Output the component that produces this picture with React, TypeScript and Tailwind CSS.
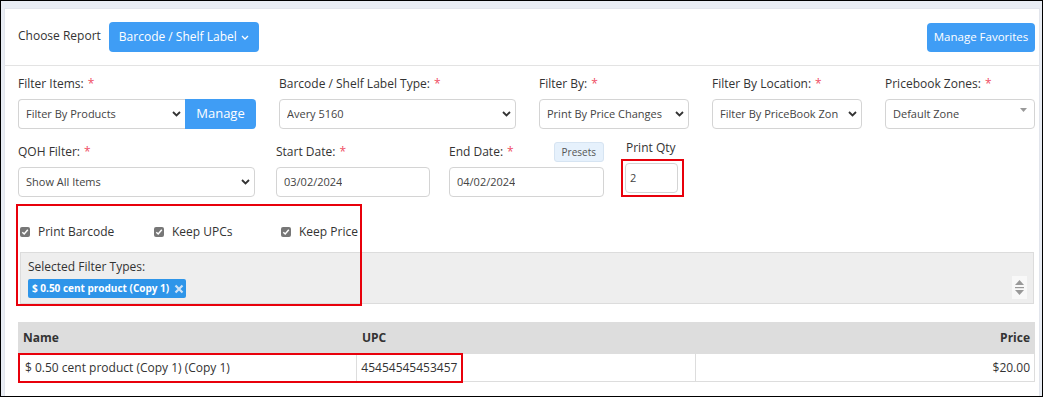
import React from "react";

const Chevron = () => (
  <svg width="9" height="6" viewBox="0 0 9 6" className="shrink-0">
    <path d="M1 1 L4.5 4.5 L8 1" fill="none" stroke="#333" strokeWidth="1.8" />
  </svg>
);

const Label = ({ text, req = true }: { text: string; req?: boolean }) => (
  <div className="text-[12px] leading-[18px] text-[#333] whitespace-nowrap">
    {text}
    {req && <span className="text-[#ef4e64] ml-[4px]">*</span>}
  </div>
);

const Select = ({ value, w, chevron = true, tri = false }: { value: string; w: string; chevron?: boolean; tri?: boolean }) => (
  <div className={`${w} h-[30px] border border-[#d4d4d4] rounded-[4px] bg-white flex items-center justify-between pl-[7px] pr-[4px]`}>
    <span className="text-[11px] text-[#444] whitespace-nowrap overflow-hidden">{value}</span>
    {chevron && <Chevron />}
    {tri && (
      <svg width="7" height="4" viewBox="0 0 7 4" className="self-start mt-[8px] mr-[3px]">
        <path d="M0 0 L7 0 L3.5 4 Z" fill="#999" />
      </svg>
    )}
  </div>
);

const Check = ({ text }: { text: string }) => (
  <div className="flex items-center gap-[8px]">
    <div className="w-[10px] h-[10px] rounded-[2px] bg-[#777] flex items-center justify-center">
      <svg width="8" height="8" viewBox="0 0 8 8">
        <path d="M1.3 4.2 L3.2 6 L6.8 1.8" fill="none" stroke="#fff" strokeWidth="1.5" />
      </svg>
    </div>
    <span className="text-[12px] text-[#333]">{text}</span>
  </div>
);

export default function App() {
  return (
    <div className="w-[1043px] h-[397px] border border-black bg-[#e9edf4] overflow-hidden font-['Open_Sans',sans-serif]">
      <div className="relative ml-[3px] mt-[7px] w-[1036px] h-[400px] bg-white border border-[#e2e5ec]">
        {/* header */}
        <div className="h-[57px] border-b border-[#e3e3e3] flex items-center justify-between pl-[13px] pr-[4px]">
          <div className="flex items-center gap-[8px]">
            <span className="text-[12px] text-[#333] mt-[-3px]">Choose Report</span>
            <div className="h-[30px] w-[150px] rounded-[4px] bg-[#3f9df5] text-white text-[12px] flex items-center justify-center gap-[4px]">
              Barcode / Shelf Label
              <svg width="8" height="5" viewBox="0 0 8 5">
                <path d="M1 1 L4 4 L7 1" fill="none" stroke="#fff" strokeWidth="1.3" />
              </svg>
            </div>
          </div>
          <div className="h-[29px] w-[108px] rounded-[4px] bg-[#3f9df5] text-white text-[11.5px] flex items-center justify-center">
            Manage Favorites
          </div>
        </div>

        {/* row 1 */}
        <div className="flex gap-[23px] pl-[13px] mt-[9px]">
          <div className="w-[238px] flex flex-col gap-[6px]">
            <Label text="Filter Items:" />
            <div className="flex">
              <div className="w-[167px] h-[30px] border border-[#d4d4d4] border-r-0 rounded-l-[4px] bg-white flex items-center justify-between pl-[7px] pr-[4px]">
                <span className="text-[11px] text-[#444]">Filter By Products</span>
                <Chevron />
              </div>
              <div className="w-[71px] h-[30px] bg-[#3f9df5] rounded-r-[4px] text-white text-[13px] flex items-center justify-center">
                Manage
              </div>
            </div>
          </div>
          <div className="w-[237px] flex flex-col gap-[6px]">
            <Label text="Barcode / Shelf Label Type:" />
            <Select value="Avery 5160" w="w-[237px]" />
          </div>
          <div className="w-[150px] flex flex-col gap-[6px]">
            <Label text="Filter By:" />
            <Select value="Print By Price Changes" w="w-[150px]" />
          </div>
          <div className="w-[150px] flex flex-col gap-[6px]">
            <Label text="Filter By Location:" />
            <Select value="Filter By PriceBook Zon" w="w-[150px]" />
          </div>
          <div className="w-[150px] flex flex-col gap-[6px]">
            <Label text="Pricebook Zones:" />
            <Select value="Default Zone" w="w-[150px]" chevron={false} tri />
          </div>
        </div>

        {/* row 2 */}
        <div className="flex items-end pl-[13px] mt-[10px]">
          <div className="w-[237px] flex flex-col gap-[6px]">
            <Label text="QOH Filter:" />
            <Select value="Show All Items" w="w-[237px]" />
          </div>
          <div className="w-[154px] ml-[21px] flex flex-col gap-[6px]">
            <Label text="Start Date:" />
            <Select value="03/02/2024" w="w-[154px]" chevron={false} />
          </div>
          <div className="w-[155px] ml-[19px] flex flex-col gap-[5px]">
            <div className="flex items-center justify-between">
              <Label text="End Date:" />
              <div className="h-[20px] px-[7px] rounded-[3px] bg-[#e6f1fc] border border-[#d6e4f2] text-[10px] text-[#555] flex items-center">
                Presets
              </div>
            </div>
            <Select value="04/02/2024" w="w-[155px]" chevron={false} />
          </div>
          <div className="ml-[17px] flex flex-col gap-[2px]">
            <div className="text-[12px] leading-[18px] text-[#333] pl-[5px]">Print Qty</div>
            <div className="border-2 border-[#e8000b] p-[2px] w-[63px]">
              <div className="w-[53px] h-[30px] border border-[#d4d4d4] rounded-[4px] flex items-center pl-[4px] text-[11px] text-[#444]">
                2
              </div>
            </div>
          </div>
        </div>

        {/* checkbox + filter types */}
        <div className="relative pl-[15px] pr-[5px] mt-[9px]">
          <div className="flex items-center h-[46px] pt-[6px]">
            <div className="w-[134px]"><Check text="Print Barcode" /></div>
            <div className="w-[127px]"><Check text="Keep UPCs" /></div>
            <Check text="Keep Price" />
          </div>
          <div className="h-[52px] border border-[#dcdcdc] bg-[#eeeeee] flex justify-between pl-[7px] pr-[6px]">
            <div className="flex flex-col">
              <div className="text-[12px] text-[#333] mt-[5px] leading-[18px]">Selected Filter Types:</div>
              <div className="mt-[3px] h-[19px] w-[158px] rounded-[2px] bg-[#2e95e9] flex items-center pl-[4px] gap-[5px]">
                <span className="text-[10px] font-bold text-white whitespace-nowrap">$ 0.50 cent product (Copy 1)</span>
                <svg width="10" height="10" viewBox="0 0 10 10">
                  <path d="M1.5 1.5 L8.5 8.5 M8.5 1.5 L1.5 8.5" stroke="#cde2f7" strokeWidth="2.2" />
                </svg>
              </div>
            </div>
            <div className="self-end mb-[4px] w-[15px] h-[23px] bg-[#f8f8f8] flex items-center justify-center">
              <svg width="11" height="18" viewBox="0 0 11 18">
                <path d="M5.5 1 L10 6 L1 6 Z" fill="#999" />
                <rect x="1" y="8" width="9" height="1.2" fill="#999" />
                <path d="M1 11 L10 11 L5.5 16 Z" fill="#999" />
              </svg>
            </div>
          </div>
          <div className="absolute left-[11px] top-[-2px] w-[346px] h-[102px] border-2 border-[#e8000b] pointer-events-none" />
        </div>

        {/* table */}
        <div className="relative ml-[13px] mr-[4px] mt-[18px]">
          <div className="grid grid-cols-3 h-[32px] bg-[#dddddd] items-center text-[12px] font-bold text-[#333]">
            <div className="pl-[5px]">Name</div>
            <div className="pl-[5px]">UPC</div>
            <div className="text-right pr-[5px]">Price</div>
          </div>
          <div className="grid grid-cols-3 h-[28px] text-[12px] text-[#333] border border-t-0 border-[#dddddd]">
            <div className="pl-[6px] flex items-center border-r border-[#dddddd]">$ 0.50 cent product (Copy 1) (Copy 1)</div>
            <div className="pl-[4px] flex items-center border-r border-[#dddddd]">45454545453457</div>
            <div className="pr-[4px] flex items-center justify-end">$20.00</div>
          </div>
          <div className="absolute left-[0px] top-[31px] w-[445px] h-[30px] border-2 border-[#e8000b] pointer-events-none" />
        </div>
      </div>
    </div>
  );
}
